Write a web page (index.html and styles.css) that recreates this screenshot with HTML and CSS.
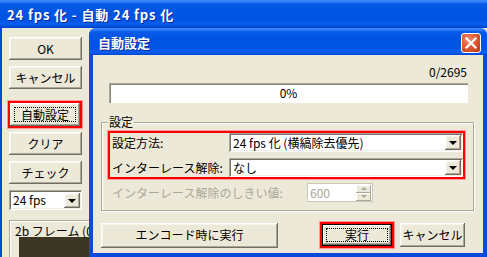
FILE: index.html
```html
<!DOCTYPE html>
<html lang="ja">
<head>
  <meta charset="UTF-8" />
  <title>24 fps 化 - 自動 24 fps 化</title>
  <link rel="stylesheet" href="styles.css">
</head>
<body>

  <!-- main window -->
  <div class="main">
    <div class="titlebar main-title">
      <span class="title-text">24 fps 化 - 自動 24 fps 化</span>
    </div>
    <div class="main-body">
      <div class="side">
        <button class="btn side-btn">OK</button>
        <button class="btn side-btn">キャンセル</button>
        <div class="mark side-mark">
          <button class="btn side-btn focused"><span class="focus-rect">自動設定</span></button>
        </div>
        <button class="btn side-btn">クリア</button>
        <button class="btn side-btn">チェック</button>
        <div class="combo side-combo">
          <span class="combo-text">24 fps</span>
          <span class="drop"><i></i></span>
        </div>
        <div class="preview">
          <div class="preview-label">2b フレーム (00</div>
          <div class="preview-img"></div>
        </div>
      </div>
    </div>
  </div>

  <!-- dialog -->
  <div class="dialog">
    <div class="titlebar dlg-title">
      <span class="title-text">自動設定</span>
      <span class="close">
        <svg width="12" height="12" viewBox="0 0 12 12">
          <path d="M1.5 1.5 L10.5 10.5 M10.5 1.5 L1.5 10.5" stroke="#fff" stroke-width="2.2" stroke-linecap="square" />
        </svg>
      </span>
    </div>
    <div class="dlg-body">
      <div class="count">0/2695</div>
      <div class="progress">0%</div>

      <fieldset class="group">
        <legend>設定</legend>
        <div class="mark group-mark">
          <div class="row">
            <span class="label">設定方法:</span>
            <div class="combo">
              <span class="combo-text">24 fps 化 (横縞除去優先)</span>
              <span class="drop"><i></i></span>
            </div>
          </div>
          <div class="row">
            <span class="label">インターレース解除:</span>
            <div class="combo">
              <span class="combo-text">なし</span>
              <span class="drop"><i></i></span>
            </div>
          </div>
        </div>
        <div class="row disabled-row">
          <span class="label wide">インターレース解除のしきい値:</span>
          <div class="spin">
            <span class="spin-text">600</span>
            <span class="spin-btns">
              <span class="spin-btn"><i class="up"></i></span>
              <span class="spin-btn"><i class="down"></i></span>
            </span>
          </div>
        </div>
      </fieldset>

      <div class="actions">
        <button class="btn encode-btn">エンコード時に実行</button>
        <div class="mark run-mark">
          <button class="btn default-btn"><span class="focus-rect">実行</span></button>
        </div>
        <button class="btn cancel-btn">キャンセル</button>
      </div>
    </div>
  </div>

</body>
</html>
```

FILE: styles.css
```css
* {
  box-sizing: border-box;
}

body {
  margin: 0;
  width: 487px;
  height: 257px;
  overflow: hidden;
  position: relative;
  background: #ece9d8;
  font-family: "Noto Sans CJK JP", "DejaVu Sans", sans-serif;
  font-size: 12px;
  color: #000;
}

/* title bars */
.titlebar {
  display: flex;
  align-items: center;
  justify-content: space-between;
  color: #fff;
  background: linear-gradient(#3a8cff 0, #2c7cf8 2px, #0a5ae8 4px, #0055e5 10px, #0053e2 20px, #0a5ff0 24px, #0048d2 27px, #003fc4 100%);
}

.title-text {
  font-weight: bold;
  font-size: 13px;
  line-height: 16px;
  text-shadow: 1px 1px #0a2a96;
}

/* main window */
.main {
  height: 257px;
  display: flex;
  flex-direction: column;
}

.main-title {
  height: 28px;
  padding: 2px 0 0 7px;
}

.main-title .title-text {
  letter-spacing: 0.9px;
}

.main-body {
  flex: 1;
  border-left: 2px solid #0a48dd;
  overflow: hidden;
}

.side {
  display: flex;
  flex-direction: column;
  padding: 9px 0 0 7px;
}

.btn {
  display: flex;
  align-items: center;
  justify-content: center;
  margin: 0;
  padding: 0;
  border: none;
  background: #ece9d8;
  font-family: inherit;
  font-size: 12px;
  line-height: 14px;
  color: #000;
  box-shadow: inset -1px -1px #716f64, inset 1px 1px #fff, inset -2px -2px #aca899, inset 2px 2px #f5f4ee;
}

.side-btn {
  width: 73px;
  height: 23px;
}

.side-btn + .side-btn {
  margin-top: 6px;
}

.side .side-mark {
  margin: 12px 0 0 -1px;
  width: 74px;
}

.side-mark + .side-btn {
  margin-top: 4px;
}

.mark {
  border: 2px solid #ff0000;
  box-shadow: 0 0 0 1px #ff9a9a;
}

.side-mark .side-btn {
  width: 70px;
  height: 23px;
}

.focus-rect {
  display: flex;
  align-items: center;
  justify-content: center;
  border: 1px dotted #000;
  width: calc(100% - 8px);
  height: calc(100% - 8px);
}

/* combobox */
.combo {
  display: flex;
  align-items: center;
  height: 19px;
  padding: 2px;
  background: #fff;
  box-shadow: inset 1px 1px #aca899, inset -1px -1px #fff, inset 2px 2px #716f64, inset -2px -2px #f1efe2;
}

.combo-text {
  flex: 1;
  padding-left: 2px;
  line-height: 14px;
  white-space: nowrap;
}

.drop {
  width: 16px;
  height: 15px;
  display: flex;
  align-items: center;
  justify-content: center;
  background: #ece9d8;
  box-shadow: inset -1px -1px #716f64, inset 1px 1px #fff, inset -2px -2px #aca899, inset 2px 2px #f5f4ee;
}

.drop i {
  display: block;
  width: 0;
  height: 0;
  border-left: 4px solid transparent;
  border-right: 4px solid transparent;
  border-top: 4px solid #000;
  margin-top: 1px;
}

.side-combo {
  width: 73px;
  height: 20px;
  margin-top: 6px;
}

/* preview panel */
.preview {
  margin-top: 10px;
  width: 110px;
  height: 40px;
  border-top: 1px solid #aca899;
  border-left: 1px solid #aca899;
  box-shadow: inset 1px 1px #fff;
  padding: 3px 0 0 5px;
}

.preview-label {
  line-height: 13px;
  white-space: nowrap;
}

.preview-img {
  margin: 0 0 0 4px;
  height: 30px;
  background: #3b3524;
}

/* dialog */
.dialog {
  position: absolute;
  left: 89px;
  top: 28px;
  width: 398px;
  height: 229px;
  display: flex;
  flex-direction: column;
  border-radius: 7px 7px 0 0;
  overflow: hidden;
  background: #0a4bdc;
}

.dlg-title {
  height: 27px;
  padding: 3px 6px 0 9px;
}

.close {
  width: 20px;
  height: 20px;
  display: flex;
  align-items: center;
  justify-content: center;
  border: 1px solid #fff;
  border-radius: 3px;
  background: radial-gradient(circle at 35% 30%, #f0896a, #d9532e 55%, #b8391b);
}

.dlg-body {
  flex: 1;
  margin: 0 4px 4px;
  background: #ece9d8;
  display: flex;
  flex-direction: column;
}

.count {
  margin-top: 10px;
  padding-right: 16px;
  text-align: right;
  line-height: 14px;
  height: 14px;
}

.progress {
  margin: 4px 15px 0 16px;
  height: 20px;
  background: #fff;
  display: flex;
  align-items: center;
  justify-content: center;
  line-height: 14px;
  box-shadow: inset 1px 1px #aca899, inset 2px 2px #8a877a, inset -1px -1px #fff;
}

/* group box */
.group {
  margin: 12px 9px 0 8px;
  padding: 0;
  min-width: 0;
  border: 1px solid #aca899;
  box-shadow: inset 1px 1px #fff, 1px 1px #fff;
}

.group legend {
  margin-left: 6px;
  padding: 0 1px;
  line-height: 14px;
  background: #ece9d8;
}

.group-mark {
  margin: 2px 8px 0 6px;
  padding-left: 2px;
  display: flex;
  flex-direction: column;
  gap: 6px;
}

.row {
  display: flex;
  align-items: center;
  height: 19px;
}

.label {
  width: 117px;
  line-height: 14px;
  white-space: nowrap;
}

.row .combo {
  flex: 1;
}

.disabled-row {
  margin: 4px 0 8px 10px;
  color: #aca899;
}

.label.wide {
  width: 195px;
}

.spin {
  width: 66px;
  height: 19px;
  display: flex;
  align-items: center;
  padding: 1px;
  background: #fff;
  border: 1px solid #c9c7ba;
}

.spin-text {
  flex: 1;
  padding-left: 1px;
  line-height: 14px;
}

.spin-btns {
  display: flex;
  flex-direction: column;
  width: 15px;
  height: 16px;
}

.spin-btn {
  flex: 1;
  display: flex;
  align-items: center;
  justify-content: center;
  background: #ece9d8;
  box-shadow: inset -1px -1px #aca899, inset 1px 1px #fff;
}

.spin-btn i {
  width: 0;
  height: 0;
  border-left: 3px solid transparent;
  border-right: 3px solid transparent;
}

.spin-btn .up {
  border-bottom: 3px solid #aca899;
}

.spin-btn .down {
  border-top: 3px solid #aca899;
}

/* bottom buttons */
.actions {
  display: flex;
  align-items: center;
  margin: 11px 18px 0 8px;
  height: 26px;
}

.encode-btn {
  width: 177px;
  height: 25px;
}

.run-mark {
  margin-left: auto;
}

.default-btn {
  width: 70px;
  height: 22px;
  box-shadow: inset 0 0 0 1px #000, inset -2px -2px #716f64, inset 2px 2px #fff, inset -3px -3px #aca899;
}

.cancel-btn {
  margin-left: 6px;
  width: 65px;
  height: 24px;
}
```
